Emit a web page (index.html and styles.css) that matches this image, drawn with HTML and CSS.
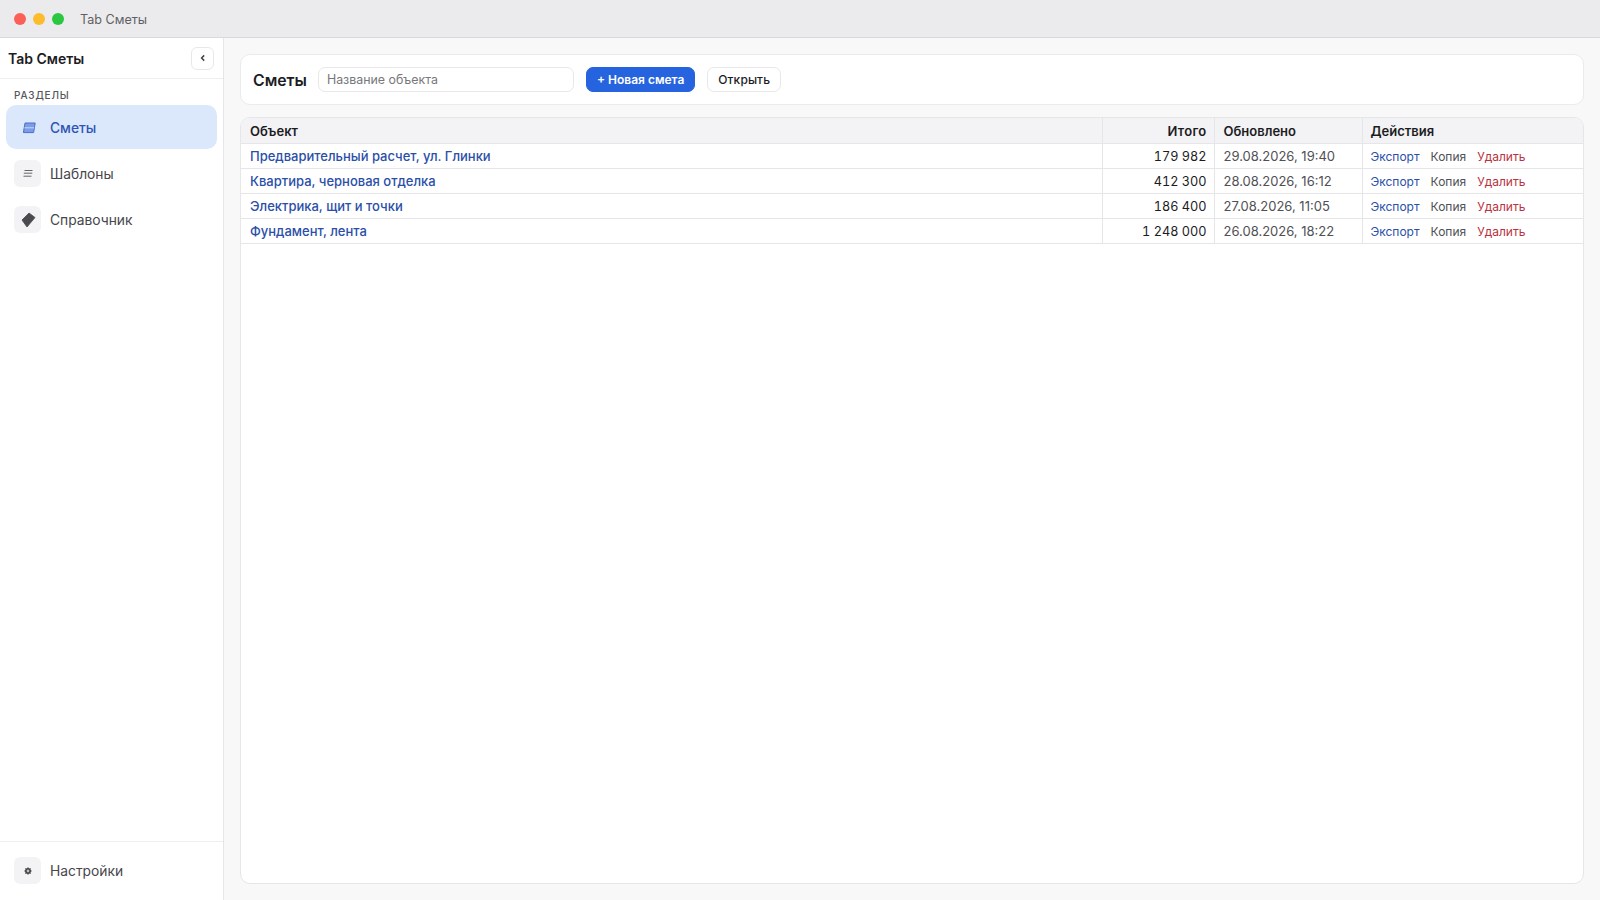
FILE: index.html
```html
<!DOCTYPE html>
<html lang="ru">
<head>
    <meta charset="UTF-8">
    <meta name="viewport" content="width=device-width, initial-scale=1.0">
    <title>Tab Сметы</title>
    <link rel="stylesheet" href="styles.css">
</head>
<body>
    <header class="titlebar">
        <div class="traffic">
            <span class="dot dot-red"></span>
            <span class="dot dot-yellow"></span>
            <span class="dot dot-green"></span>
        </div>
        <span class="window-title">Tab Сметы</span>
    </header>

    <div class="app">
        <aside class="sidebar">
            <div class="sidebar-head">
                <span class="brand">Tab Сметы</span>
                <button class="collapse">
                    <svg width="8" height="8" viewBox="0 0 8 8"><path d="M5.2 1.4 2.6 4l2.6 2.6" fill="none" stroke="#444" stroke-width="1.5"/></svg>
                </button>
            </div>
            <div class="section-label">РАЗДЕЛЫ</div>
            <nav class="nav">
                <a class="nav-item active">
                    <span class="nav-icon">
                        <svg width="16" height="12" viewBox="-2 0 16 12"><path d="M3 1h10.2l-1.6 9.6H1.4z" fill="#7d9ce6" stroke="#4a6fcf" stroke-width="1"/><path d="M2.4 5.8h9.8" stroke="#c9d9f7" stroke-width="1"/></svg>
                    </span>
                    Сметы
                </a>
                <a class="nav-item">
                    <span class="nav-icon">
                        <svg width="10" height="7" viewBox="0 0 10 7"><path d="M1.5 .5h8M.8 3.2h8.5M.5 6.2h8" stroke="#66666b" stroke-width="1"/></svg>
                    </span>
                    Шаблоны
                </a>
                <a class="nav-item">
                    <span class="nav-icon">
                        <svg width="17" height="16" viewBox="-2 0 17 16"><path d="M1 8 8 1l6 4.5-8 9.5z" fill="#4a4a4f" stroke="#4a4a4f" stroke-width=".8" stroke-linejoin="round"/></svg>
                    </span>
                    Справочник
                </a>
            </nav>
            <div class="sidebar-foot">
                <a class="nav-item">
                    <span class="nav-icon">
                        <svg width="8" height="8" viewBox="0 0 8 8"><circle cx="4" cy="4" r="2.2" fill="none" stroke="#444" stroke-width="1.6"/><path d="M4 .2v7.6M.2 4h7.6M1.3 1.3l5.4 5.4M6.7 1.3 1.3 6.7" stroke="#444" stroke-width=".8"/><circle cx="4" cy="4" r=".9" fill="#f3f3f5"/></svg>
                    </span>
                    Настройки
                </a>
            </div>
        </aside>

        <main class="main">
            <section class="toolbar">
                <h1>Сметы</h1>
                <input class="search" type="text" placeholder="Название объекта">
                <button class="btn btn-primary">+ Новая смета</button>
                <button class="btn">Открыть</button>
            </section>

            <section class="table-card">
                <table>
                    <colgroup>
                        <col class="col-name">
                        <col class="col-total">
                        <col class="col-date">
                        <col>
                    </colgroup>
                    <thead>
                        <tr>
                            <th>Объект</th>
                            <th class="num">Итого</th>
                            <th>Обновлено</th>
                            <th>Действия</th>
                        </tr>
                    </thead>
                    <tbody>
                        <tr>
                            <td><a class="name">Предварительный расчет, ул. Глинки</a></td>
                            <td class="num">179 982</td>
                            <td class="date">29.08.2026, 19:40</td>
                            <td class="actions"><a class="export">Экспорт</a><a class="copy">Копия</a><a class="del">Удалить</a></td>
                        </tr>
                        <tr>
                            <td><a class="name">Квартира, черновая отделка</a></td>
                            <td class="num">412 300</td>
                            <td class="date">28.08.2026, 16:12</td>
                            <td class="actions"><a class="export">Экспорт</a><a class="copy">Копия</a><a class="del">Удалить</a></td>
                        </tr>
                        <tr>
                            <td><a class="name">Электрика, щит и точки</a></td>
                            <td class="num">186 400</td>
                            <td class="date">27.08.2026, 11:05</td>
                            <td class="actions"><a class="export">Экспорт</a><a class="copy">Копия</a><a class="del">Удалить</a></td>
                        </tr>
                        <tr>
                            <td><a class="name">Фундамент, лента</a></td>
                            <td class="num">1 248 000</td>
                            <td class="date">26.08.2026, 18:22</td>
                            <td class="actions"><a class="export">Экспорт</a><a class="copy">Копия</a><a class="del">Удалить</a></td>
                        </tr>
                    </tbody>
                </table>
            </section>
        </main>
    </div>
</body>
</html>
```

FILE: styles.css
```css
* {
    box-sizing: border-box;
}

body {
    margin: 0;
    height: 900px;
    overflow: hidden;
    display: flex;
    flex-direction: column;
    font-family: Inter, "Noto Sans", sans-serif;
    color: #1c1c1f;
    background-color: #f8f8f9;
}

.titlebar {
    height: 38px;
    flex: none;
    display: flex;
    align-items: center;
    background-color: #ebebed;
    border-bottom: 1px solid #d9d9dc;
}

.traffic {
    display: flex;
    gap: 7px;
    margin-left: 14px;
}

.dot {
    width: 12px;
    height: 12px;
    border-radius: 50%;
}

.dot-red { background-color: #fc5f58; }
.dot-yellow { background-color: #fdbb2e; }
.dot-green { background-color: #2bc741; }

.window-title {
    margin-left: 16px;
    padding-top: 1px;
    font-size: 12.6px;
    color: #5f5f63;
}

.app {
    flex: 1;
    display: flex;
    min-height: 0;
}

/* Sidebar */
.sidebar {
    width: 224px;
    flex: none;
    display: flex;
    flex-direction: column;
    background-color: #fff;
    border-right: 1px solid #e6e6e9;
}

.sidebar-head {
    height: 41px;
    display: flex;
    align-items: center;
    justify-content: space-between;
    padding: 0 9px 0 8px;
    border-bottom: 1px solid #efeff1;
}

.brand {
    font-size: 14px;
    font-weight: 600;
}

.collapse {
    width: 23px;
    height: 23px;
    padding: 0;
    display: flex;
    align-items: center;
    justify-content: center;
    background-color: #fff;
    border: 1px solid #e8e8ea;
    border-radius: 6px;
}

.section-label {
    margin: 10px 0 4px 14px;
    font-size: 10px;
    font-weight: 500;
    line-height: 12px;
    letter-spacing: 0.08em;
    color: #56565b;
}

.nav {
    display: flex;
    flex-direction: column;
    gap: 2px;
    padding: 0 6px;
    flex: 1;
}

.nav-item {
    height: 44px;
    display: flex;
    align-items: center;
    gap: 9px;
    padding: 1px 8px 0;
    font-size: 13.8px;
    color: #46464b;
    border-radius: 10px;
}

.nav-item.active {
    font-weight: 500;
    color: #2f55b5;
    background-color: #dbe8fc;
}

.nav-icon {
    width: 27px;
    height: 27px;
    flex: none;
    display: flex;
    align-items: center;
    justify-content: center;
    background-color: #f3f3f5;
    border-radius: 6px;
}

.active .nav-icon {
    background-color: transparent;
}

.sidebar-foot {
    height: 59px;
    padding: 6px 6px 0;
    border-top: 1px solid #efeff1;
}

/* Main area */
.main {
    flex: 1;
    min-width: 0;
    display: flex;
    flex-direction: column;
    gap: 12px;
    padding: 16px;
}

.toolbar {
    height: 51px;
    flex: none;
    display: flex;
    align-items: center;
    padding: 0 12px;
    background-color: #fff;
    border: 1px solid #ebebee;
    border-radius: 10px;
}

.toolbar h1 {
    margin: 1px 11px 0 0;
    font-size: 15.8px;
    font-weight: 600;
}

.search {
    width: 256px;
    height: 25px;
    padding: 0 8px 1px;
    margin-right: 12px;
    font-family: inherit;
    font-size: 12.4px;
    background-color: #fff;
    border: 1px solid #e8e8ea;
    border-radius: 7px;
    outline: none;
}

.search::placeholder {
    color: #77777c;
}

.btn {
    height: 25px;
    padding: 0 10px;
    margin-right: 12px;
    font-family: inherit;
    font-size: 12px;
    font-weight: 500;
    letter-spacing: 0.1px;
    color: #1c1c1f;
    background-color: #fff;
    border: 1px solid #e8e8ea;
    border-radius: 7px;
}

.btn-primary {
    font-weight: 600;
    letter-spacing: 0;
    color: #fff;
    background-color: #2563df;
    border-color: #2563df;
}

.table-card {
    flex: 1;
    min-height: 0;
    background-color: #fff;
    border: 1px solid #e6e6e9;
    border-radius: 10px;
    overflow: hidden;
}

table {
    width: 100%;
    table-layout: fixed;
    border-collapse: collapse;
    font-size: 13px;
}

.col-name { width: 861px; }
.col-total { width: 112px; }
.col-date { width: 148px; }

th, td {
    height: 25px;
    padding: 0 8px 0 9px;
    text-align: left;
    border-bottom: 1px solid #e6e6e9;
    border-left: 1px solid #e6e6e9;
}

th:first-child, td:first-child {
    border-left: none;
}

th {
    padding-top: 1px;
    font-weight: 600;
    background-color: #f3f3f5;
}

th:last-child, td:last-child {
    padding-left: 8px;
}

th.num, td.num {
    padding-right: 7px;
    text-align: right;
}

th.num {
    letter-spacing: 0.3px;
}

td.num {
    padding-top: 2px;
    font-size: 12.7px;
    font-variant-numeric: tabular-nums;
    color: #1c1c1f;
}

.name {
    font-weight: 500;
    color: #2a4fa8;
}

.date {
    color: #505055;
}

.actions {
    padding-top: 2px;
    font-size: 12px;
}

.actions a {
    margin-right: 11px;
}

.export { color: #2a4fa8; }
.copy { color: #505055; }
.del { color: #b93240; }
```
